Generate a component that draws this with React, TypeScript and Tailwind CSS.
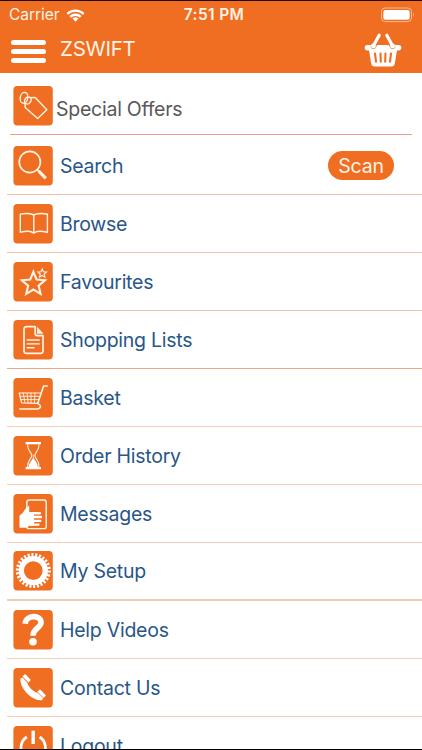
import type { ReactNode } from "react";

type MenuItem = {
  label: string;
  icon: ReactNode;
  divider: string;
  action?: string;
};

function starPoints(cx: number, cy: number, outer: number, inner: number) {
  return Array.from({ length: 10 }, (_, i) => {
    const r = i % 2 === 0 ? outer : inner;
    const a = (i * Math.PI) / 5 - Math.PI / 2;
    return `${(cx + r * Math.cos(a)).toFixed(2)},${(cy + r * Math.sin(a)).toFixed(2)}`;
  }).join(" ");
}

function Tile({ children }: { children: ReactNode }) {
  return (
    <svg
      viewBox="0 0 40 40"
      className="size-10 shrink-0"
      fill="none"
      stroke="#fff3e6"
      strokeWidth="1.4"
      strokeLinecap="round"
      strokeLinejoin="round"
    >
      <rect x="0.4" y="0" width="39.4" height="39.4" rx="4" fill="#f06e22" stroke="none" />
      {children}
    </svg>
  );
}

const tagIcon = (
  <>
    <path d="M17 11.6 22.2 11.4 33.8 23.7 24.7 32.6 12.2 21.4 12 17.5" />
    <ellipse cx="11" cy="11.8" rx="3.8" ry="5.4" transform="rotate(12 11 11.8)" />
    <ellipse cx="14.9" cy="14.4" rx="3" ry="3.8" transform="rotate(35 14.9 14.4)" />
  </>
);

const searchIcon = (
  <>
    <circle cx="16.8" cy="16" r="10.6" strokeWidth="1.7" />
    <path d="M24.2 23.6 27 26.4" strokeWidth="1.8" />
    <path d="M25.8 25.2 32.8 32.3" strokeWidth="3.2" strokeLinecap="butt" />
  </>
);

const bookIcon = (
  <>
    <path
      d="M7.3 10.2C11 9.2 18 9 20.8 10.9 23.6 9 30.6 9.2 34.4 10.2V28.2C30.2 27.2 24.2 27 22 28.4L20.8 29.2 19.5 28.4C17.4 27 11.4 27.2 7.3 28.2Z"
      strokeWidth="1.4"
    />
    <path d="M20.8 11V28" strokeWidth="1.4" />
  </>
);

const starIcon = (
  <>
    <polygon points={starPoints(20.4, 22, 12.2, 5.5)} strokeWidth="2.1" strokeLinejoin="miter" />
    <polygon points={starPoints(29.2, 11.4, 4.6, 2.1)} strokeWidth="1.1" strokeLinejoin="miter" />
  </>
);

const documentIcon = (
  <>
    <path
      d="M22.2 6.7H13.7Q11 6.7 11 9.4V30.7Q11 33.4 13.7 33.4H27.3Q30 33.4 30 30.7V15.6H24.2Q22.2 15.6 22.2 13.6Z"
      strokeWidth="1.7"
    />
    <path d="M24 6.7 30.6 13.8H24Z" fill="#fff3e6" stroke="none" />
    <path d="M14.2 20H26.2M14.2 23.9H26.2M14.2 27.7H21" strokeWidth="1.4" />
  </>
);

const cartIcon = (
  <>
    <path d="M34.2 8H30.6L24.7 25.4C28.4 27.3 28.4 30 24.6 31H6.8" strokeWidth="1.6" />
    <path d="M27.8 15H6.2L8.6 24.8 24.8 25.4" strokeWidth="1.2" />
    <path
      d="M7 18.3H27M7.8 21.6H26M10.2 15 12 24.8M14 15 15.2 24.8M18 15V25M22 15 21.4 25"
      strokeWidth="0.9"
    />
  </>
);

const hourglassIcon = (
  <>
    <path d="M12.6 6H28V8.3H12.6ZM12.6 30.9H28V33.2H12.6Z" fill="#fff" stroke="none" />
    <path
      d="M14.6 8C14 15 18.7 16 18.7 19.5S14 24 14.6 31M26 8C26.6 15 21.9 16 21.9 19.5S26.6 24 26 31"
      strokeWidth="1.1"
    />
    <path d="M15.7 31.2C15.7 27.5 17.5 25.8 20.3 22 23.1 25.8 24.9 27.5 24.9 31.2Z" fill="#fff" stroke="none" />
    <path d="M20.3 19V23" strokeWidth="0.8" />
  </>
);

const messagesIcon = (
  <>
    <rect x="13.8" y="6" width="19.4" height="28.6" rx="2.2" strokeWidth="1.4" />
    <path
      d="M6.5 21.8Q10.5 18.5 12 15.5 13.3 12.4 16.2 11.8V32L12.6 33.8H6.5Z"
      fill="#fff"
      stroke="none"
    />
    <path d="M15 18.2H21V31.8H15Z" fill="#fff" stroke="none" />
    <path d="M18 19.2H26.8M18 23H28M18 26.9H27.2M18 30.6H25.4" stroke="#fff" strokeWidth="2.4" />
  </>
);

const gearIcon = (
  <>
    <circle cx="20.3" cy="19.6" r="12" stroke="#fff" strokeWidth="5.2" />
    <circle
      cx="20.3"
      cy="19.6"
      r="15.7"
      stroke="#fff"
      strokeWidth="3.6"
      strokeLinecap="butt"
      pathLength="104"
      strokeDasharray="2.2 1.8"
    />
  </>
);

const questionIcon = (
  <>
    <path
      d="M12.2 13.7C12.8 4.4 28.4 4.6 28 12.6 27.8 17.8 20 18.5 20 25.8"
      stroke="#fff"
      strokeWidth="5.6"
      strokeLinecap="butt"
    />
    <circle cx="20" cy="31.8" r="3.8" fill="#fff" stroke="none" />
  </>
);

const phoneIcon = (
  <g fill="#fff" stroke="none">
    <path d="M7.5 10.6C6.2 20 19.5 33.8 29 32.2L30.2 29.8 25 25C20.5 24.3 15 18.6 14.2 14.6L9.5 9.6Z" />
    <rect x="-4.2" y="-2" width="8.4" height="4" rx="0.8" transform="translate(13.6 10.4) rotate(45)" />
    <rect x="-4.4" y="-2" width="8.8" height="4" rx="0.8" transform="translate(28.6 25.8) rotate(45)" />
    <path d="M9.6 8.8 16 15.2M24 23.6 30.8 30.4" stroke="#f06e22" strokeWidth="0.7" />
  </g>
);

const powerIcon = (
  <>
    <path d="M13.8 11A12.2 12.2 0 1 0 26.6 11" stroke="#fff" strokeWidth="2.7" strokeLinecap="butt" />
    <path d="M20.2 4.7V18" stroke="#fff" strokeWidth="3.4" strokeLinecap="butt" />
  </>
);

const items: MenuItem[] = [
  { label: "Search", icon: searchIcon, divider: "border-b border-[#f5c3a7]", action: "Scan" },
  { label: "Browse", icon: bookIcon, divider: "border-b border-[#f5c3a7]" },
  { label: "Favourites", icon: starIcon, divider: "border-b border-[#f5c3a7]" },
  { label: "Shopping Lists", icon: documentIcon, divider: "border-b border-[#efa98a]" },
  { label: "Basket", icon: cartIcon, divider: "border-b border-[#f6cdb8]" },
  { label: "Order History", icon: hourglassIcon, divider: "border-b border-[#f6cdb8]" },
  { label: "Messages", icon: messagesIcon, divider: "border-b border-[#f6cdb8]" },
  { label: "My Setup", icon: gearIcon, divider: "border-b-2 border-[#f0cdb9]" },
  { label: "Help Videos", icon: questionIcon, divider: "border-b border-[#f6cdb8]" },
  { label: "Contact Us", icon: phoneIcon, divider: "border-b border-[#f6cdb8]" },
  { label: "Logout", icon: powerIcon, divider: "border-b border-[#f6cdb8]" },
];

function StatusBar() {
  return (
    <div className="grid h-[28px] grid-cols-3 items-center pr-[7px] pl-[9px] text-[#fff3e6]">
      <div className="flex items-center gap-[7px]">
        <span className="text-[15.5px] tracking-[-0.05px]">Carrier</span>
        <svg viewBox="0 0 20 14" className="h-[13px] w-[19px]" fill="none" stroke="#fff" strokeWidth="2.5">
          <path d="M1.2 5.2C6 .6 14 .6 18.8 5.2M4.3 8.5C7.5 5.4 12.5 5.4 15.7 8.5" />
          <path d="M10 13.6 6.8 10.3Q10 7.6 13.2 10.3Z" fill="#fff" stroke="none" />
        </svg>
      </div>
      <span className="pl-[4px] text-center text-[15.5px] font-semibold tracking-[0.35px]">7:51 PM</span>
      <svg viewBox="0 0 34 16" className="-mt-px h-4 w-[34px] justify-self-end">
        <rect x="0.5" y="1" width="30" height="13.6" rx="3.6" fill="none" stroke="#f9b98f" />
        <rect x="2.3" y="2.9" width="26.4" height="9.8" rx="2" fill="#fff" />
        <path d="M32 5.5Q34 7.8 32 10Z" fill="#f9b98f" />
      </svg>
    </div>
  );
}

function BasketIcon() {
  return (
    <svg viewBox="0 0 38 34" className="h-[34px] w-[38px]" fill="none" stroke="#fff" strokeLinecap="round">
      <path d="M3.4 14.8H34.6" strokeWidth="5.4" />
      <path d="M4.5 14H33.5L30.8 30.5Q30.3 33.4 27.4 33.4H10.6Q7.7 33.4 7.2 30.5Z" fill="#fff" stroke="none" />
      <path d="M11 20.5 12 28.7M16.5 20.5 16.8 28.7M21.5 20.5 21.2 28.7M27 20.5 26 28.7" stroke="#f06e22" strokeWidth="2.1" />
      <path d="M15.4 2.5 9.4 13.5M22.6 2.5 28.6 13.5" stroke="#f06e22" strokeWidth="5.2" />
      <path d="M15.2 2.2 9.4 13M22.8 2.2 28.6 13" strokeWidth="3.2" />
      <path d="M9.4 12.8V13.2M28.6 12.8V13.2" strokeWidth="4.8" />
    </svg>
  );
}

function Header() {
  return (
    <header className="h-[73px] border-t border-[#25060a] bg-[#f06e22]">
      <StatusBar />
      <div className="flex h-[42px] items-center pr-5 pl-[11px]">
        <button aria-label="Menu" className="flex w-[35px] flex-col gap-[4px] pt-[3px]">
          <span className="h-[5px] rounded-full bg-white" />
          <span className="h-[5px] rounded-full bg-white" />
          <span className="h-[5px] rounded-full bg-white" />
        </button>
        <h1 className="pb-[2px] pl-[14px] text-[20.5px] leading-6 tracking-[-0.25px] text-[#fff3e6]">ZSWIFT</h1>
        <button aria-label="Basket" className="ml-auto">
          <BasketIcon />
        </button>
      </div>
    </header>
  );
}

export default function App() {
  return (
    <div className="flex h-[750px] w-[422px] flex-col overflow-hidden border-b border-black bg-white font-['Inter',sans-serif]">
      <Header />
      <main className="min-h-0 flex-1 overflow-hidden">
        <div className="mr-[10px] ml-[10px] flex h-[62px] items-center gap-[3px] border-b border-[#eba185] pt-[5px] pl-[3px]">
          <Tile>{tagIcon}</Tile>
          <span className="pt-[7px] text-[19.5px] tracking-[-0.25px] text-[#58585a]">Special Offers</span>
        </div>
        <ul>
          {items.map((item) => (
            <li
              key={item.label}
              className={`ml-[7px] flex h-[58px] items-center gap-[7px] pl-[6px] first:h-[60px] first:pt-[2px] ${item.divider}`}
            >
              <Tile>{item.icon}</Tile>
              <span className="pt-[2px] text-[19.5px] tracking-[-0.25px] text-[#285687]">{item.label}</span>
              {item.action && (
                <button className="mr-7 ml-auto h-[29px] w-[66px] rounded-full bg-[#f06e22] pt-px text-[19.5px] leading-[28px] tracking-[-0.2px] text-[#fff3e6]">
                  {item.action}
                </button>
              )}
            </li>
          ))}
        </ul>
      </main>
    </div>
  );
}
